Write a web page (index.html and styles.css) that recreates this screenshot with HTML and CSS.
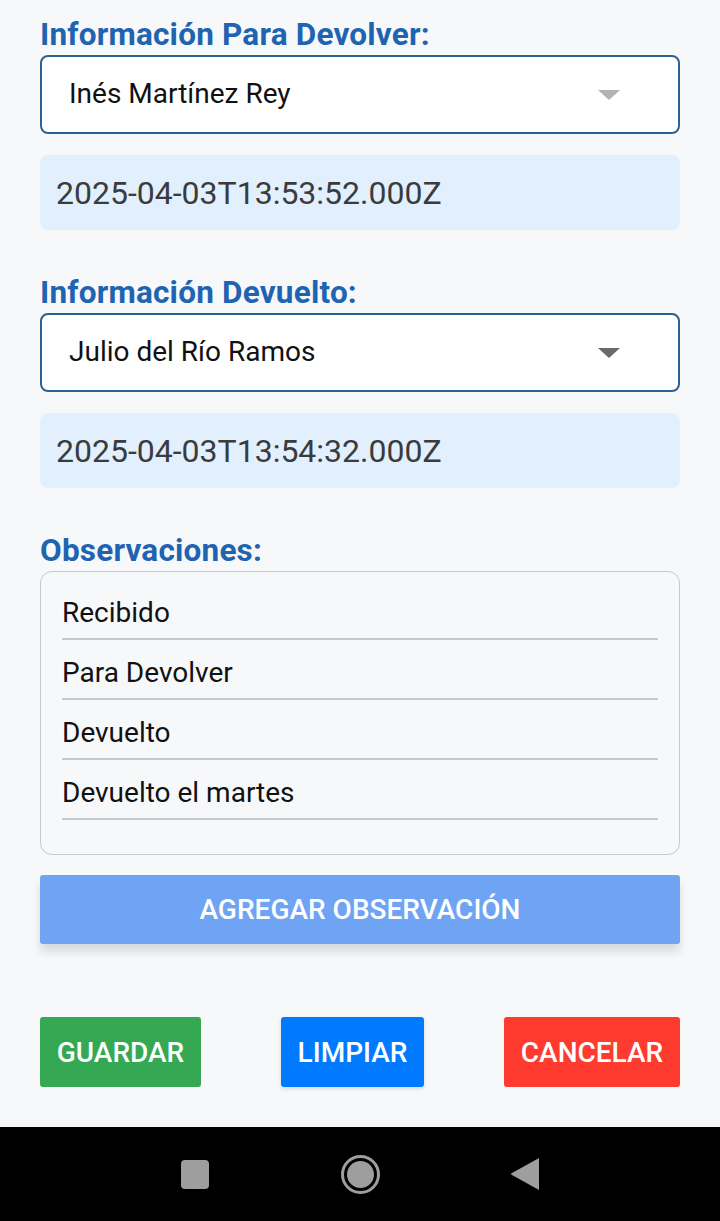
FILE: index.html
```html
<!DOCTYPE html>
<html lang="es">
<head>
<meta charset="utf-8">
<link rel="stylesheet" href="styles.css">
</head>
<body>
<div class="screen">
  <main class="form">
    <section class="group">
      <h2 class="label">Información Para Devolver:</h2>
      <div class="select">
        <span class="select-text">Inés Martínez Rey</span>
        <span class="caret caret-light"></span>
      </div>
      <div class="date">2025-04-03T13:53:52.000Z</div>
    </section>

    <section class="group">
      <h2 class="label">Información Devuelto:</h2>
      <div class="select">
        <span class="select-text">Julio del Río Ramos</span>
        <span class="caret caret-dark"></span>
      </div>
      <div class="date">2025-04-03T13:54:32.000Z</div>
    </section>

    <section class="group obs-group">
      <h2 class="label">Observaciones:</h2>
      <ul class="obs">
        <li class="obs-item">Recibido</li>
        <li class="obs-item">Para Devolver</li>
        <li class="obs-item">Devuelto</li>
        <li class="obs-item">Devuelto el martes</li>
      </ul>
      <button class="btn-add">AGREGAR OBSERVACIÓN</button>
    </section>

    <div class="actions">
      <button class="btn btn-green">GUARDAR</button>
      <button class="btn btn-blue">LIMPIAR</button>
      <button class="btn btn-red">CANCELAR</button>
    </div>
  </main>

  <nav class="navbar">
    <span class="nav-square"></span>
    <span class="nav-home"><span class="nav-dot"></span></span>
    <svg class="nav-back" width="30" height="34" viewBox="0 0 30 34"><path d="M29 1 L29 33 L2 18 Q0 17 2 16 Z" fill="#9e9e9e"/></svg>
  </nav>
</div>
</body>
</html>
```

FILE: styles.css
```css
* { box-sizing: border-box; }
html, body { margin: 0; padding: 0; }
body {
  background: #f7f8fa;
  font-family: Roboto, "Noto Sans", "Liberation Sans", sans-serif;
  width: 720px;
  height: 1221px;
  overflow: hidden;
}
.screen {
  display: flex;
  flex-direction: column;
  height: 1221px;
}
.form {
  flex: 1;
  padding: 18px 40px 0 40px;
  display: flex;
  flex-direction: column;
}
.group { display: flex; flex-direction: column; }
.group + .group { margin-top: 46px; }
.label {
  margin: 0;
  font-size: 31.5px;
  font-weight: 700;
  color: #1f64b0;
  line-height: 34px;
  letter-spacing: 0.2px;
  height: 37px;
}
.select {
  height: 79px;
  background: #fff;
  border: 2px solid #2c6196;
  border-radius: 8px;
  display: flex;
  align-items: center;
  padding: 0 58px 0 27px;
  justify-content: space-between;
}
.select-text {
  font-size: 28px;
  color: #111;
  padding-bottom: 2px;
}
.caret {
  width: 0; height: 0;
  border-left: 11px solid transparent;
  border-right: 11px solid transparent;
  border-top: 10px solid #b2b2b2;
}
.caret-dark { border-top-color: #6a6a6a; }
.date {
  margin-top: 21px;
  height: 75px;
  background: #e2effc;
  border-radius: 8px;
  display: flex;
  align-items: center;
  padding-left: 16px;
  font-size: 32px;
  color: #3b3b3d;
}
.obs {
  list-style: none;
  margin: 0;
  padding: 8px 21px 34px 21px;
  border: 1.5px solid #c9c9cc;
  border-radius: 12px;
  height: 284px;
}
.obs-item {
  height: 60px;
  border-bottom: 2px solid #c8c8cb;
  display: flex;
  align-items: center;
  font-size: 28px;
  color: #111;
  padding-top: 6px;
}
.btn-add {
  margin-top: 20px;
  height: 69px;
  border: none;
  border-radius: 3px;
  background: #6fa4f4;
  color: #fff;
  font-family: inherit;
  font-size: 28px;
  font-weight: 500;
  box-shadow: 0 8px 10px rgba(0,0,0,0.12);
}
.actions {
  margin-top: 73px;
  display: flex;
  justify-content: space-between;
}
.btn {
  height: 70px;
  border: none;
  border-radius: 3px;
  color: #fff;
  font-family: inherit;
  font-size: 28px;
  font-weight: 500;
  padding: 0;
}
.btn-green { background: #34a853; width: 161px; }
.btn-blue { background: #007bff; width: 143px; box-shadow: 0 2px 4px rgba(0,0,0,0.12); }
.btn-red { background: #ff3b30; width: 176px; }
.navbar {
  height: 94px;
  background: #000;
  display: flex;
  align-items: center;
  justify-content: center;
}
.nav-square {
  width: 28px; height: 29px;
  background: #9e9e9e;
  border-radius: 4px;
  margin-right: 132px;
}
.nav-home {
  width: 39px; height: 39px;
  border: 3px solid #9e9e9e;
  border-radius: 50%;
  display: flex; align-items: center; justify-content: center;
  margin-right: 130px;
}
.nav-dot {
  width: 27px; height: 27px;
  background: #9e9e9e;
  border-radius: 50%;
}
.nav-back { display: block; }
```
